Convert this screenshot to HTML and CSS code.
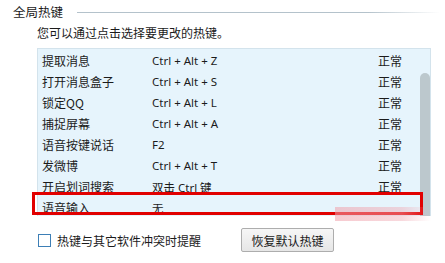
FILE: index.html
```html
<!DOCTYPE html>
<html lang="zh-CN">
<head>
<meta charset="utf-8">
<title>全局热键</title>
<link rel="stylesheet" href="styles.css">
</head>
<body>
<div class="window">
  <div class="header">
    <span class="title">全局热键</span>
    <span class="rule"></span>
  </div>
  <div class="desc">您可以通过点击选择要更改的热键。</div>
  <div class="list">
    <div class="rows">
      <div class="row"><span class="name">提取消息</span><span class="key">Ctrl + Alt + Z</span><span class="state">正常</span></div>
      <div class="row"><span class="name">打开消息盒子</span><span class="key">Ctrl + Alt + S</span><span class="state">正常</span></div>
      <div class="row"><span class="name">锁定QQ</span><span class="key">Ctrl + Alt + L</span><span class="state">正常</span></div>
      <div class="row"><span class="name">捕捉屏幕</span><span class="key">Ctrl + Alt + A</span><span class="state">正常</span></div>
      <div class="row"><span class="name">语音按键说话</span><span class="key">F2</span><span class="state">正常</span></div>
      <div class="row"><span class="name">发微博</span><span class="key">Ctrl + Alt + T</span><span class="state">正常</span></div>
      <div class="row"><span class="name">开启划词搜索</span><span class="key">双击 Ctrl 键</span><span class="state">正常</span></div>
      <div class="row"><span class="name">语音输入</span><span class="key">无</span><span class="state"></span></div>
    </div>
    <div class="scroll"><div class="thumb"></div></div>
  </div>
  <div class="footer">
    <label class="check"><span class="box"></span><span class="check-text">热键与其它软件冲突时提醒</span></label>
    <button class="btn">恢复默认热键</button>
  </div>
  <div class="highlight"></div>
  <div class="mark"></div>
</div>
</body>
</html>
```
FILE: styles.css
```css
html, body {
  margin: 0;
  padding: 0;
  background: #ffffff;
}
body {
  width: 445px;
  height: 263px;
  overflow: hidden;
  font-family: "Noto Sans CJK SC", "Noto Sans", sans-serif;
  color: #1b1b1b;
}
.window {
  position: relative;
  width: 445px;
  height: 263px;
  padding-top: 4px;
  box-sizing: border-box;
}
.header {
  display: flex;
  align-items: center;
  height: 16px;
  padding-left: 13px;
  padding-right: 5px;
}
.title {
  font-size: 12.5px;
  line-height: 16px;
}
.rule {
  flex: 1;
  height: 1px;
  margin-left: 14px;
  background: linear-gradient(to right, #b4c2cb 0%, #b4c2cb 80%, #ffffff 100%);
}
.desc {
  margin-top: 5px;
  margin-left: 37px;
  font-size: 12px;
  line-height: 16px;
}
.list {
  display: flex;
  margin-top: 7px;
  margin-left: 37px;
  width: 394px;
  height: 168px;
  box-sizing: border-box;
  background: #e6f4fc;
  border: 1px solid #d3e3ec;
  border-bottom: none;
}
.rows {
  flex: 1;
  padding-top: 1px;
}
.row {
  display: grid;
  grid-template-columns: 110px 1fr auto;
  align-items: center;
  height: 21px;
  padding-left: 4px;
  padding-right: 18px;
  font-size: 12px;
}
.key {
  font-family: "Noto Sans", "Noto Sans CJK SC", sans-serif;
  font-size: 11.5px;
}
.state {
  width: 24px;
}
.scroll {
  width: 10px;
  padding-top: 24px;
  display: flex;
  flex-direction: column;
}
.thumb {
  flex: 1;
  background: #bcc8cd;
  border-radius: 5px 5px 0 0;
}
.footer {
  display: flex;
  align-items: center;
  margin-top: 12px;
  height: 24px;
  padding-left: 38px;
}
.check {
  display: flex;
  align-items: center;
  width: 203px;
  font-size: 12px;
}
.box {
  width: 11px;
  height: 11px;
  border: 1px solid #3d7fb6;
  background: #ffffff;
  margin-right: 6px;
}
.btn {
  width: 93px;
  height: 24px;
  padding: 0;
  border: 1px solid #adadad;
  border-radius: 2px;
  background: linear-gradient(#f6f6f6, #e6e6e6);
  font-family: "Noto Sans CJK SC", sans-serif;
  font-size: 12px;
  color: #1b1b1b;
}
.highlight {
  position: absolute;
  left: 32px;
  top: 192px;
  width: 391px;
  height: 23px;
  box-sizing: border-box;
  border: 3px solid #e10000;
}
.mark {
  position: absolute;
  left: 335px;
  top: 207px;
  width: 96px;
  height: 14px;
  background: linear-gradient(to right, rgba(240, 160, 170, 0.55), rgba(240, 170, 180, 0.45) 70%, rgba(255, 255, 255, 0));
}
```
